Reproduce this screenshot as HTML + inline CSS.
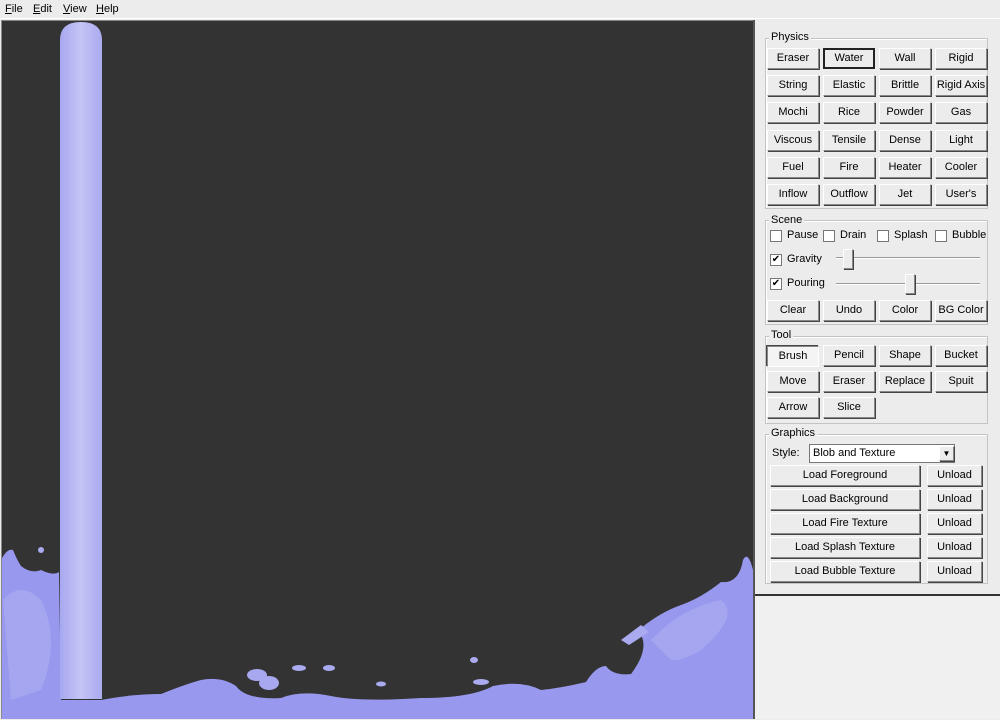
<!DOCTYPE html>
<html><head><style>
*{margin:0;padding:0;box-sizing:border-box}
body{width:1000px;height:719px;background:#ececec;font-family:"Liberation Sans",Arial,sans-serif;font-size:11px;color:#000;position:relative;overflow:hidden}
.menu{position:absolute;left:0;top:0;width:1000px;height:19px;background:#ececec;border-bottom:1px solid #fff}
.menu span{position:absolute;top:3px}
.menu u{text-decoration:underline}
#cv{position:absolute;left:1px;top:20px;width:752px;height:699px;background:#333;border-left:1px solid #888;border-top:1px solid #888}
.panel{position:absolute;left:753px;top:20px;width:247px;height:699px;background:#ececec;border-left:2px solid #555}
.grp{position:absolute;border:1px solid #c4c4c4;box-shadow:1px 1px 0 #fff inset}
.gl{position:absolute;background:#ececec;padding:0 2px}
.b{position:absolute;height:21px;border:1px solid;border-color:#fff #888 #888 #fff;box-shadow:1px 1px 0 #444;background:#ececec;text-align:center;line-height:19px;white-space:nowrap}
.b.sel{border:2px solid #222;box-shadow:none;line-height:17px}
.b.pr{border-color:#888 #fff #fff #888;box-shadow:-1px -1px 0 #444;background:#f4f4f4}
.cb{position:absolute;width:12px;height:12px;border:1px solid #777;background:#fff;font-size:10px;line-height:10px;text-align:center}
.t{position:absolute}
</style></head><body>
<div class="menu"><span style="left:5px"><u>F</u>ile</span><span style="left:33px"><u>E</u>dit</span><span style="left:63px"><u>V</u>iew</span><span style="left:96px"><u>H</u>elp</span></div>
<div id="cv">
<svg width="752" height="699" viewBox="1 21 752 699" style="position:absolute;left:0;top:0">
<defs><linearGradient id="col" x1="0" x2="1"><stop offset="0" stop-color="#a8a8f0"/><stop offset=".5" stop-color="#c4c4f6"/><stop offset="1" stop-color="#aaaaf0"/></linearGradient></defs>
<path d="M0 560 Q6 548 12 550 Q16 560 20 566 Q30 574 40 570 Q52 576 58 572 L60 700 L100 700 Q130 694 160 694 Q185 684 200 680 Q220 676 235 686 Q245 700 280 698 Q300 690 330 696 Q360 702 420 698 Q470 698 492 686 Q520 680 540 690 Q560 688 585 682 Q595 666 605 666 Q612 676 630 674 Q648 650 640 635 Q628 640 640 628 Q660 612 680 605 Q700 598 720 582 Q738 584 742 560 Q747 550 752 570 L752 719 L0 719 Z" fill="#9898ee"/>
<path d="M2 600 Q20 580 40 600 Q60 640 40 690 L10 700 Z M650 640 Q680 608 720 600 Q740 615 700 650 Q680 662 670 660 Z" fill="#aeaef2" opacity=".6"/>
<ellipse cx="256" cy="675" rx="10" ry="6" fill="#a8a8f0"/><ellipse cx="268" cy="683" rx="10" ry="7" fill="#a8a8f0"/>
<ellipse cx="298" cy="668" rx="7" ry="3" fill="#aaaaf0"/><ellipse cx="328" cy="668" rx="6" ry="3" fill="#aaaaf0"/>
<ellipse cx="380" cy="684" rx="5" ry="2.5" fill="#aaaaf0"/><ellipse cx="473" cy="660" rx="4" ry="3" fill="#aaaaf0"/>
<ellipse cx="480" cy="682" rx="8" ry="3" fill="#aaaaf0"/><ellipse cx="40" cy="550" rx="3" ry="3" fill="#aaaaf0"/>
<path d="M620 640 L640 625 L648 632 L628 645 Z" fill="#aaaaf0"/>
<path d="M59 40 Q59 22 80 22 Q101 22 101 40 L101 699 L59 699 Z" fill="url(#col)"/>
</svg></div>
<div class="panel"></div>
<div style="position:absolute;left:755px;top:594px;width:245px;height:2px;background:#333"></div>
<div style="position:absolute;left:755px;top:596px;width:245px;height:123px;background:#f0f0f0"></div>

<div class="grp" style="left:765px;top:38px;width:223px;height:171px"></div><div class="gl" style="left:769px;top:31px">Physics</div>
<div class="b" style="left:767px;top:48px;width:52px">Eraser</div><div class="b sel" style="left:823px;top:48px;width:52px">Water</div><div class="b" style="left:879px;top:48px;width:52px">Wall</div><div class="b" style="left:935px;top:48px;width:52px">Rigid</div>
<div class="b" style="left:767px;top:75px;width:52px">String</div><div class="b" style="left:823px;top:75px;width:52px">Elastic</div><div class="b" style="left:879px;top:75px;width:52px">Brittle</div><div class="b" style="left:935px;top:75px;width:52px">Rigid Axis</div>
<div class="b" style="left:767px;top:102px;width:52px">Mochi</div><div class="b" style="left:823px;top:102px;width:52px">Rice</div><div class="b" style="left:879px;top:102px;width:52px">Powder</div><div class="b" style="left:935px;top:102px;width:52px">Gas</div>
<div class="b" style="left:767px;top:130px;width:52px">Viscous</div><div class="b" style="left:823px;top:130px;width:52px">Tensile</div><div class="b" style="left:879px;top:130px;width:52px">Dense</div><div class="b" style="left:935px;top:130px;width:52px">Light</div>
<div class="b" style="left:767px;top:157px;width:52px">Fuel</div><div class="b" style="left:823px;top:157px;width:52px">Fire</div><div class="b" style="left:879px;top:157px;width:52px">Heater</div><div class="b" style="left:935px;top:157px;width:52px">Cooler</div>
<div class="b" style="left:767px;top:184px;width:52px">Inflow</div><div class="b" style="left:823px;top:184px;width:52px">Outflow</div><div class="b" style="left:879px;top:184px;width:52px">Jet</div><div class="b" style="left:935px;top:184px;width:52px">User's</div>

<div class="grp" style="left:765px;top:220px;width:223px;height:105px"></div><div class="gl" style="left:769px;top:214px">Scene</div>
<div class="cb" style="left:770px;top:230px"></div><div class="t" style="left:787px;top:229px">Pause</div>
<div class="cb" style="left:823px;top:230px"></div><div class="t" style="left:840px;top:229px">Drain</div>
<div class="cb" style="left:877px;top:230px"></div><div class="t" style="left:894px;top:229px">Splash</div>
<div class="cb" style="left:935px;top:230px"></div><div class="t" style="left:952px;top:229px">Bubble</div>
<div class="cb" style="left:770px;top:254px">✔</div><div class="t" style="left:787px;top:253px">Gravity</div>
<div class="cb" style="left:770px;top:278px">✔</div><div class="t" style="left:787px;top:277px">Pouring</div>
<div style="position:absolute;left:836px;top:257px;width:144px;height:2px;border-top:1px solid #999;border-bottom:1px solid #fff"></div>
<div class="b" style="left:843px;top:249px;width:10px;height:20px"></div>
<div style="position:absolute;left:836px;top:283px;width:144px;height:2px;border-top:1px solid #999;border-bottom:1px solid #fff"></div>
<div class="b" style="left:905px;top:274px;width:10px;height:20px"></div>
<div class="b" style="left:767px;top:300px;width:52px">Clear</div><div class="b" style="left:823px;top:300px;width:52px">Undo</div><div class="b" style="left:879px;top:300px;width:52px">Color</div><div class="b" style="left:935px;top:300px;width:52px">BG Color</div>

<div class="grp" style="left:765px;top:336px;width:223px;height:88px"></div><div class="gl" style="left:769px;top:329px">Tool</div>
<div class="b pr" style="left:767px;top:346px;width:52px">Brush</div><div class="b" style="left:823px;top:345px;width:52px">Pencil</div><div class="b" style="left:879px;top:345px;width:52px">Shape</div><div class="b" style="left:935px;top:345px;width:52px">Bucket</div>
<div class="b" style="left:767px;top:371px;width:52px">Move</div><div class="b" style="left:823px;top:371px;width:52px">Eraser</div><div class="b" style="left:879px;top:371px;width:52px">Replace</div><div class="b" style="left:935px;top:371px;width:52px">Spuit</div>
<div class="b" style="left:767px;top:397px;width:52px">Arrow</div><div class="b" style="left:823px;top:397px;width:52px">Slice</div>

<div class="grp" style="left:765px;top:434px;width:223px;height:150px"></div><div class="gl" style="left:769px;top:427px">Graphics</div>
<div class="t" style="left:772px;top:447px">Style:</div>
<div style="position:absolute;left:809px;top:444px;width:146px;height:19px;background:#fff;border:1px solid #777;padding:2px 3px">Blob and Texture</div>
<div class="b" style="left:939px;top:446px;width:15px;height:15px;line-height:13px;font-size:8px">▼</div>
<div class="b" style="left:770px;top:465px;width:150px">Load Foreground</div><div class="b" style="left:927px;top:465px;width:55px">Unload</div>
<div class="b" style="left:770px;top:489px;width:150px">Load Background</div><div class="b" style="left:927px;top:489px;width:55px">Unload</div>
<div class="b" style="left:770px;top:513px;width:150px">Load Fire Texture</div><div class="b" style="left:927px;top:513px;width:55px">Unload</div>
<div class="b" style="left:770px;top:537px;width:150px">Load Splash Texture</div><div class="b" style="left:927px;top:537px;width:55px">Unload</div>
<div class="b" style="left:770px;top:561px;width:150px">Load Bubble Texture</div><div class="b" style="left:927px;top:561px;width:55px">Unload</div>
</body></html>
